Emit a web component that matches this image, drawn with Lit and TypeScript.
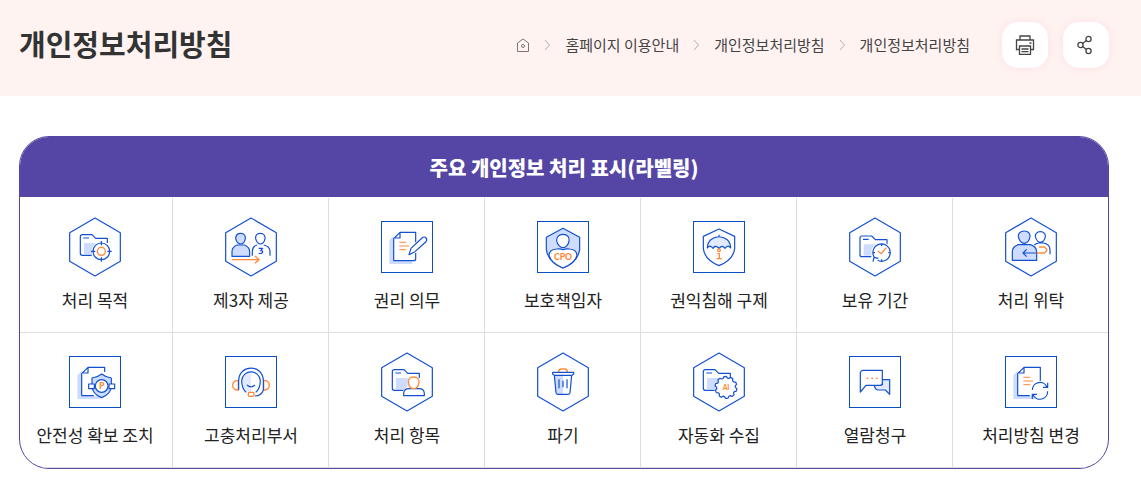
import { LitElement, html, svg, css } from "lit";
import { customElement } from "lit/decorators.js";

type Frame = "hex" | "square";
interface Item { label: string; frame: Frame; art: unknown }

const folder = svg`
  <path class="tint" d="M-33 -12H2V22H-33Z"/>
  <path class="line" d="M37 -12V-26H2L-9 -37H-38Q-44 -37 -44 -31V19Q-44 25 -38 25H-10M-35 -27H-18"/>`;

const sheet = svg`
  <path class="tint" d="M-53 -20L-40 -33V41H16V51H-53Z"/>
  <path class="line" d="M-40 41V-25L-21 -44V-27H-36"/>`;

const textLines = svg`<path class="accent thin" d="M-23 -14H-2M-23 -3H6M-23 8H-2"/>`;

const gearPath = (() => {
  const teeth = 10;
  let d = "";
  for (let i = 0; i < teeth; i++) {
    [[0, 28], [0.2, 33], [0.55, 33], [0.75, 28]].forEach(([step, radius], k) => {
      const angle = ((i + step) / teeth) * Math.PI * 2;
      const x = (21 + radius * Math.cos(angle)).toFixed(1);
      const y = (16 + radius * Math.sin(angle)).toFixed(1);
      d += `${i + k === 0 ? "M" : "L"}${x} ${y}`;
    });
  }
  return d + "Z";
})();

const items: Item[] = [
  { label: "처리 목적", frame: "hex", art: svg`${folder}
      <circle class="blank" cx="19" cy="13" r="29"/>
      <circle class="line" cx="19" cy="13" r="25"/>
      <path class="line" d="M19 -18V-5M19 31V44M-12 13H1M37 13H50"/>
      <circle class="accent" cx="19" cy="13" r="12"/>` },
  { label: "제3자 제공", frame: "hex", art: svg`
      <path class="line tint" d="M-57 28V14Q-57 0 -42 -6H-20Q-4 0 -4 14V28Z"/>
      <path class="line tint" d="M-31 -41C-20 -41 -16 -33 -17 -25C-19 -14 -25 -9 -31 -9S-43 -14 -46 -25C-46 -34 -42 -41 -31 -41Z"/>
      <path class="line" d="M4 26V12Q5 -2 18 -6M38 -6Q56 -2 57 12V26M28 -41C39 -41 43 -33 42 -25C40 -14 34 -9 28 -9S17 -14 14 -25C13 -34 17 -41 28 -41Z"/>
      <path class="line" d="M23 4H35L29 11Q36 11 35 16Q33 21 23 19"/>
      <path class="accent" d="M-57 38H24M12 27L24 38L12 49"/>` },
  { label: "권리 의무", frame: "square", art: svg`${sheet}${textLines}
      <path class="line" d="M-21 -44H26V-14M26 18V35Q26 41 20 41H-40"/>
      <path class="line blank" d="M6 23L12 4L45 -27Q52 -33 57 -27Q62 -21 56 -15L24 14Z"/>` },
  { label: "보호책임자", frame: "square", art: svg`
      <path class="line tint" d="M0 -56L50 -29V8Q44 46 0 63Q-44 46 -50 8V-29Z"/>
      <path class="line blank" d="M0 8Q8 4 20 6Q41 8 42 25Q36 48 0 63Q-36 48 -42 25Q-41 8 -20 6Q-8 4 0 8Z"/>
      <path class="line blank" d="M0 -38C14 -38 20 -29 18 -18C17 -8 8 2 0 2S-17 -8 -19 -18C-20 -29 -14 -38 0 -38Z"/>
      <text class="glyph" x="0" y="40" font-size="26">CPO</text>` },
  { label: "권익침해 구제", frame: "square", art: svg`
      <path class="line" d="M0 -54L47 -32V4Q44 38 0 56Q-44 38 -47 4V-32Z"/>
      <path class="line pale" d="M-35 3C-34 -42 34 -42 35 3Q29 -5 23 -1L18 4Q12 -5 6 -1L0 4L-6 -1Q-12 -5 -18 4L-23 -1Q-29 -5 -35 3ZM0 -31V-37"/>
      <circle class="accent" cx="0" cy="10" r="4"/>
      <path class="accent" d="M-5 20H1V35M-7 35H9"/>` },
  { label: "보유 기간", frame: "hex", art: svg`
      <g transform="translate(-1 4)">${folder}</g>
      <circle class="blank" cx="20" cy="17" r="31"/>
      <path class="line" d="M-2 31A26 26 0 1 1 8 40M-6 44L-3 31L10 34M20 -9V-3M20 43V37M46 17H40M-6 17H0"/>
      <path class="accent" d="M8 12L19 20L34 2"/>` },
  { label: "처리 위탁", frame: "hex", art: svg`
      <path class="line" d="M10 -6Q16 -12 24 -12H37Q56 -9 57 8V22M28 -46C39 -46 44 -38 43 -31C41 -20 35 -14 28 -14S16 -20 13 -31C12 -38 17 -46 28 -46Z"/>
      <path class="line tint" d="M-56 40V14Q-56 -2 -38 -7H-2Q16 -2 17 14V40Z"/>
      <path class="line tint" d="M-20 -48C-7 -48 -2 -39 -3 -31C-5 -18 -13 -11 -20 -11S-35 -18 -38 -31C-39 -39 -34 -48 -20 -48Z"/>
      <path class="line" d="M17 18H-23M-13 7L-24 18L-13 29"/>
      <path class="accent" d="M17 18H40L47 12V6L40 0H24"/>` },
  { label: "안전성 확보 조치", frame: "square", art: svg`${sheet}
      <path class="line" d="M-21 -44H29V-30M-40 41H-4"/>
      <path class="line tint" d="M20 -24Q32 -14 49 -12V12Q48 36 20 47Q-8 36 -9 12V-12Q8 -14 20 -24Z"/>
      <path class="line blank" d="M-19 6H-2V20H-19ZM42 6H59V20H42Z"/>
      <circle class="line blank" cx="20" cy="12" r="19"/>
      <text class="glyph" x="20" y="21" font-size="26">P</text>` },
  { label: "고충처리부서", frame: "square", art: svg`
      <path class="pale-fill" d="M0 -30V34Q-28 20 -27 -4Q-24 -29 0 -30Z"/>
      <path class="accent" d="M-38 -4H-43Q-55 -2 -55 10T-43 24H-38ZM38 -4H43Q55 -2 55 10T43 24H38Z"/>
      <path class="line" d="M-37 24V-4C-36 -54 36 -54 37 -4V24Q31 42 12 42M-14 31Q-28 19 -28 -4C-25 -39 25 -39 28 -4Q28 19 14 31M-12 9Q0 20 12 9"/>
      <rect class="accent" x="-8" y="31" width="17" height="12" rx="3"/>` },
  { label: "처리 항목", frame: "hex", art: svg`${folder}
      <path class="blank" d="M-13 45V28L4 10H34L56 30V45Z"/>
      <path class="line blank" d="M-10 41V34Q-9 20 6 20H36Q51 20 52 34V41Z"/>
      <path class="accent blank" d="M20 -15C32 -15 37 -7 36 1C34 13 27 20 20 20S6 13 4 1C3 -7 8 -15 20 -15Z"/>` },
  { label: "파기", frame: "hex", art: svg`
      <path class="tint" d="M-25 -20H0V37H-20Z"/>
      <path class="accent" d="M-13 -29Q-13 -39 -6 -39H6Q13 -39 13 -29"/>
      <path class="line" d="M-31 -29H32V-24L27 -20H-26L-31 -24ZM-26 -20L-21 32Q-20 37 -16 37H16Q20 37 21 32L26 -20M-12 -8V19M0 -4V16M12 -8V19"/>` },
  { label: "자동화 수집", frame: "hex", art: svg`
      <g transform="translate(-3 0)">${folder}</g>
      <path class="line blank" d="${gearPath}"/>
      <text class="glyph" x="21" y="23" font-size="20">AI</text>` },
  { label: "열람청구", frame: "square", art: svg`
      <path class="line pale" d="M22 -7H44V37L31 24H8Q0 22 -2 10L22 8Z"/>
      <path class="line blank" d="M-44 30V-28Q-43 -34 -37 -35H22V4Q21 9 16 10H-27Z"/>
      <path class="accent dots" d="M-23 -11H-22M-9 -11H-8M5 -11H6"/>` },
  { label: "처리방침 변경", frame: "square", art: svg`${sheet}${textLines}
      <path class="line" d="M-21 -44H28V-4M-40 41H-4"/>
      <path class="line" d="M4 24A23 23 0 0 1 48 15M50 2V16H36M50 28A23 23 0 0 1 6 38M4 51V37H18"/>` },
];

const frames = {
  hex: svg`<path class="line" d="M0 -87L76 -43V43L0 87L-76 43V-43Z"/>`,
  square: svg`<rect class="line frame" x="-76.5" y="-76.5" width="153" height="153"/>`,
};

@customElement("label-grid")
export class LabelGrid extends LitElement {
  static styles = css`
    :host { display: block; }
    .card {
      overflow: hidden;
      border: 1px solid #5546a6;
      border-radius: 30px;
      background: #fff;
    }
    .heading {
      margin: 0;
      padding: 16px 20px 14px;
      background: #5546a6;
      color: #fff;
      font-size: 20px;
      font-weight: 900;
      line-height: 30px;
      text-align: center;
    }
    .grid {
      display: grid;
      grid-template-columns: repeat(7, 1fr);
      margin: 0 -1px 0 -3px;
      padding: 1px 0 0;
      list-style: none;
    }
    .cell {
      display: flex;
      flex-direction: column;
      align-items: center;
      gap: 9px;
      padding: 19px 0 19px 1px;
      border: solid #ddd;
      border-width: 0 1px 1px 0;
      color: #222;
      font-size: 17px;
      line-height: 27px;
      text-align: center;
    }
    .icon { display: block; width: 60px; height: 60px; }
    .line, .accent { fill: none; stroke: #1450d2; stroke-width: 3.6; stroke-linejoin: round; }
    .frame { stroke: #0a4ec4; stroke-width: 3; stroke-linejoin: miter; }
    .accent { stroke: #ff8a3c; stroke-width: 4; }
    .thin { stroke-width: 3; }
    .dots { stroke-width: 5; stroke-linecap: round; }
    .tint { fill: #cddcff; }
    .pale, .pale-fill { fill: #e1eaff; }
    .blank { fill: #fff; }
    .glyph {
      fill: #ff8a3c;
      font-family: Lato, sans-serif;
      font-weight: 900;
      text-anchor: middle;
    }
  `;

  render() {
    return html`
      <section class="card">
        <h2 class="heading">주요 개인정보 처리 표시(라벨링)</h2>
        <ul class="grid">
          ${items.map((item) => html`
            <li class="cell">
              <svg class="icon" viewBox="-90 -90 180 180" aria-hidden="true">${frames[item.frame]}${item.art}</svg>
              <span>${item.label}</span>
            </li>`)}
        </ul>
      </section>`;
  }
}

@customElement("app-root")
export class AppRoot extends LitElement {
  static styles = css`
    :host {
      display: block;
      font-family: "Noto Sans CJK KR", "Noto Sans", sans-serif;
      color: #333;
    }
    .top {
      display: flex;
      align-items: flex-start;
      justify-content: space-between;
      padding: 22px 32px 28px 19px;
      background: #fff3f2;
    }
    .title { margin: 0; font-size: 29px; font-weight: 700; line-height: 42px; }
    .side { display: flex; align-items: center; gap: 32px; }
    .trail {
      display: flex;
      align-items: center;
      gap: 14px;
      margin: 0;
      padding: 0;
      list-style: none;
      font-size: 15px;
      line-height: 24px;
    }
    .step { display: flex; align-items: center; gap: 14px; }
    .link { color: #444; text-decoration: none; }
    .home, .chevron { display: block; fill: none; }
    .home { stroke: #777; }
    .chevron { stroke: #b8adad; }
    .tools { display: flex; gap: 15px; }
    .tool {
      display: grid;
      place-items: center;
      width: 46px;
      height: 46px;
      padding: 0;
      border: 0;
      border-radius: 16px;
      background: #fff;
      box-shadow: 0 0 10px #ffdfe3;
      cursor: pointer;
    }
    .glyph { display: block; fill: none; stroke: #444; stroke-width: 1.3; }
    .content { padding: 40px 32px 25px 19px; }
  `;

  private step(text: string) {
    return html`
      <li class="step">
        <svg class="chevron" width="7" height="12" viewBox="0 0 7 12" aria-hidden="true"><path d="M1 1L5.5 6L1 11"/></svg>
        <a class="link" href="#">${text}</a>
      </li>`;
  }

  render() {
    return html`
      <header class="top">
        <h1 class="title">개인정보처리방침</h1>
        <div class="side">
          <nav aria-label="breadcrumb">
            <ol class="trail">
              <li>
                <a class="link" href="#" aria-label="홈">
                  <svg class="home" width="14" height="14" viewBox="0 0 14 14"><path d="M1.5 13.5V5L7 1L12.5 5V13.5Z"/><circle cx="7" cy="8" r="1.5"/></svg>
                </a>
              </li>
              ${this.step("홈페이지 이용안내")}
              ${this.step("개인정보처리방침")}
              ${this.step("개인정보처리방침")}
            </ol>
          </nav>
          <div class="tools">
            <button class="tool" type="button" aria-label="인쇄">
              <svg class="glyph" width="20" height="20" viewBox="0 0 20 20"><path d="M5 5V1H15V5M5 14.5H1.5V5H18.5V14.5H15M4.5 11H15.5V19.5H4.5ZM6.5 14H13.5M6.5 16.7H13.5M14.5 8H16.5"/></svg>
            </button>
            <button class="tool" type="button" aria-label="공유">
              <svg class="glyph" width="20" height="20" viewBox="0 0 20 20"><circle cx="4.5" cy="10" r="2.6"/><circle cx="12.5" cy="4" r="2.6"/><circle cx="12.5" cy="16" r="2.6"/><path d="M6.6 8.4L10.4 5.6M6.6 11.6L10.4 14.4"/></svg>
            </button>
          </div>
        </div>
      </header>
      <main class="content"><label-grid></label-grid></main>`;
  }
}
